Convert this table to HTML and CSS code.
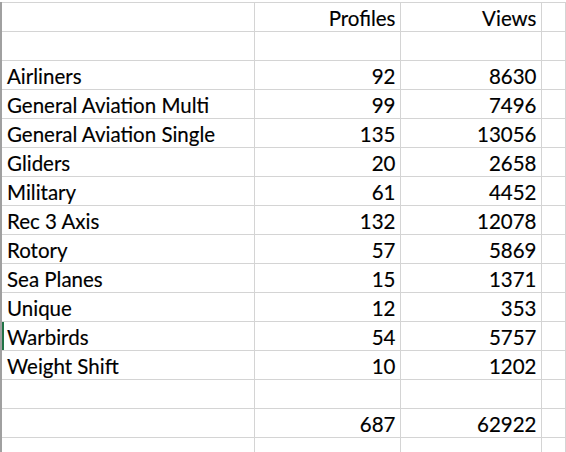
FILE: index.html
```html
<!DOCTYPE html>
<html lang="en">
<head>
    <meta charset="UTF-8">
    <title>Profiles and Views</title>
    <link rel="stylesheet" href="styles.css">
</head>
<body>
    <table class="sheet">
        <colgroup>
            <col class="col-a">
            <col class="col-b">
            <col class="col-c">
            <col class="col-d">
        </colgroup>
        <tr><td></td><td class="num">Profiles</td><td class="num">Views</td><td></td></tr>
        <tr><td></td><td></td><td></td><td></td></tr>
        <tr><td>Airliners</td><td class="num">92</td><td class="num">8630</td><td></td></tr>
        <tr><td>General Aviation Multi</td><td class="num">99</td><td class="num">7496</td><td></td></tr>
        <tr><td>General Aviation Single</td><td class="num">135</td><td class="num">13056</td><td></td></tr>
        <tr><td>Gliders</td><td class="num">20</td><td class="num">2658</td><td></td></tr>
        <tr><td>Military</td><td class="num">61</td><td class="num">4452</td><td></td></tr>
        <tr><td>Rec 3 Axis</td><td class="num">132</td><td class="num">12078</td><td></td></tr>
        <tr><td>Rotory</td><td class="num">57</td><td class="num">5869</td><td></td></tr>
        <tr><td>Sea Planes</td><td class="num">15</td><td class="num">1371</td><td></td></tr>
        <tr><td>Unique</td><td class="num">12</td><td class="num">353</td><td></td></tr>
        <tr class="selected"><td>Warbirds</td><td class="num">54</td><td class="num">5757</td><td></td></tr>
        <tr><td>Weight Shift</td><td class="num">10</td><td class="num">1202</td><td></td></tr>
        <tr><td></td><td></td><td></td><td></td></tr>
        <tr><td></td><td class="num">687</td><td class="num">62922</td><td></td></tr>
        <tr><td></td><td></td><td></td><td></td></tr>
    </table>
</body>
</html>
```

FILE: styles.css
```css
body {
    margin: 0;
    padding: 2px 0 0 0;
    background: #fff;
    overflow: hidden;
    font-family: Lato, "Liberation Sans", sans-serif;
    font-size: 20.5px;
    color: #000;
}
.sheet {
    border-collapse: collapse;
    table-layout: fixed;
    width: 566px;
    border-left: 2px solid #a0a0a0;
}
.col-a {
    width: 253px;
}
.col-b {
    width: 146px;
}
.col-c {
    width: 141px;
}
td {
    height: 26px;
    padding: 0 4px 2px 5px;
    border: 1px solid #d4d4d4;
    vertical-align: bottom;
    white-space: nowrap;
    line-height: 22px;
    overflow: hidden;
    -webkit-text-stroke: 0.15px #000;
}
td.num {
    text-align: right;
}
.selected td:first-child {
    box-shadow: inset 2px 0 0 0 #217346;
}
```
